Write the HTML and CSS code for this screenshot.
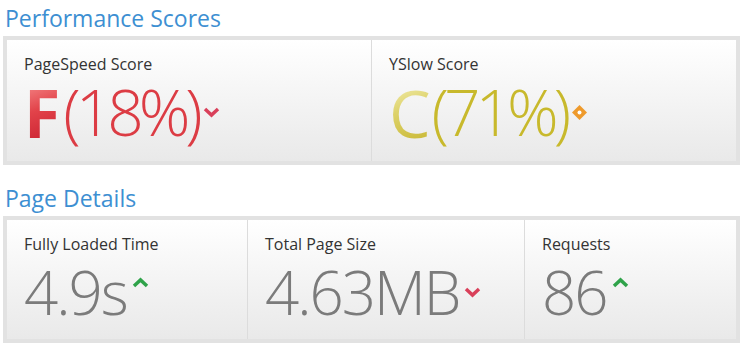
FILE: index.html
```html
<html lang="en">
<head>
    <meta charset="UTF-8">
    <meta name="viewport" content="width=device-width, initial-scale=1.0">
    <title>Performance Report</title>
    <link rel="stylesheet" href="styles.css">
</head>
<body>
    <div class="section">
        <h2>Performance Scores</h2>
        <div class="box scores">
            <div class="cell">
                <div class="label">PageSpeed Score</div>
                <div class="value">
                    <span class="grade grade-f">F</span><span class="pct red">(18%)</span>
                    <svg class="trend" width="17" height="11" viewBox="0 0 17 11"><path d="M2 2 L8.5 8 L15 2" fill="none" stroke="#d9405a" stroke-width="3.5"/></svg>
                </div>
            </div>
            <div class="cell">
                <div class="label">YSlow Score</div>
                <div class="value">
                    <span class="grade grade-c">C</span><span class="pct yellow">(71%)</span>
                    <svg class="trend diamond" width="17" height="17" viewBox="0 0 17 17"><path d="M8.5 1 L16 8.5 L8.5 16 L1 8.5 Z" fill="#ee9a2c"/><circle cx="8.5" cy="8.5" r="2" fill="#fff"/></svg>
                </div>
            </div>
        </div>
    </div>

    <div class="section">
        <h2>Page Details</h2>
        <div class="box details">
            <div class="cell">
                <div class="label">Fully Loaded Time</div>
                <div class="value gray">4.9s
                    <svg class="trend up" width="17" height="11" viewBox="0 0 17 11"><path d="M2 9 L8.5 3 L15 9" fill="none" stroke="#2fa34a" stroke-width="3.5"/></svg>
                </div>
            </div>
            <div class="cell">
                <div class="label">Total Page Size</div>
                <div class="value gray">4.63MB
                    <svg class="trend" width="17" height="11" viewBox="0 0 17 11"><path d="M2 2 L8.5 8 L15 2" fill="none" stroke="#d9405a" stroke-width="3.5"/></svg>
                </div>
            </div>
            <div class="cell">
                <div class="label">Requests</div>
                <div class="value gray">86
                    <svg class="trend up" width="17" height="11" viewBox="0 0 17 11"><path d="M2 9 L8.5 3 L15 9" fill="none" stroke="#2fa34a" stroke-width="3.5"/></svg>
                </div>
            </div>
        </div>
    </div>
</body>
</html>
```

FILE: styles.css
```css
body {
    margin: 0;
    padding: 0;
    background-color: #ffffff;
    font-family: "Open Sans", "DejaVu Sans", sans-serif;
}
.section {
    width: 737px;
    margin-left: 3px;
}
h2 {
    font-size: 23px;
    font-weight: 400;
    color: #3d8fd2;
    margin: 0;
    padding: 2px 0 0 2px;
    height: 34px;
    line-height: 32px;
}
.section + .section h2 {
    margin-top: 15px;
}
.box {
    display: grid;
    border: 4px solid #e2e2e2;
    box-sizing: border-box;
}
.scores {
    grid-template-columns: 364px 1fr;
    height: 129px;
}
.details {
    grid-template-columns: 240px 277px 1fr;
    height: 127px;
}
.cell {
    background: linear-gradient(#ffffff 0%, #f6f6f6 40%, #e9e9e9 100%);
    border-left: 1px solid #dcdcdc;
    padding: 12px 0 0 17px;
}
.cell:first-child {
    border-left: none;
}
.label {
    font-size: 16px;
    color: #333333;
    line-height: 24px;
}
.value {
    display: flex;
    align-items: center;
    font-size: 66px;
    font-weight: 300;
    line-height: 60px;
    margin-top: 6px;
    letter-spacing: -1px;
}
.grade {
    font-weight: 700;
    -webkit-background-clip: text;
    background-clip: text;
    color: transparent;
    margin-right: 4px;
}
.grade-f {
    background-image: linear-gradient(160deg, #f58a8a 0%, #e2434a 45%, #c81f2e 100%);
}
.grade-c {
    font-weight: 400;
    margin-right: 2px;
    background-image: linear-gradient(160deg, #f4efb4 0%, #ddd26a 45%, #c9b835 100%);
}
.pct {
    font-size: 64px;
    letter-spacing: -5px;
}
.red {
    color: #dc3c44;
}
.yellow {
    color: #c8b92c;
}
.gray {
    color: #7b7b7b;
    font-size: 60px;
    letter-spacing: -2px;
}
.trend {
    margin-left: 5px;
}
.up {
    margin-bottom: 20px;
}
```
